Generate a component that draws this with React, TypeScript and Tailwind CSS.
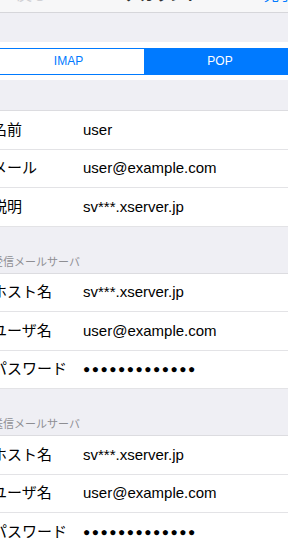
import React from 'react'

const font = { fontFamily: '"Liberation Sans", "Noto Sans CJK JP", sans-serif' }

interface Row {
  label: string
  value: string
  secret?: boolean
}

function Section({ title, rows }: { title?: string; rows: Row[] }) {
  return (
    <div>
      {title && (
        <div className="h-[46px] flex items-end pb-[5px] -ml-[8px] text-[11px] leading-none text-[#8e8e93]">
          {title}
        </div>
      )}
      <div className="bg-white border-t border-[#dcdce0]">
        {rows.map((r) => (
          <div key={r.label} className="h-[38.5px] flex items-center border-b border-[#e3e3e6]">
            <span className="w-[91px] shrink-0 -ml-[8px] text-[15px] text-black whitespace-nowrap">{r.label}</span>
            {r.secret ? (
              <span className="text-[12px] tracking-[1.5px] text-black">●●●●●●●●●●●●●</span>
            ) : (
              <span className="text-[15px] text-black">{r.value}</span>
            )}
          </div>
        ))}
      </div>
    </div>
  )
}

export default function App() {
  const account: Row[] = [
    { label: '名前', value: 'user' },
    { label: 'メール', value: 'user@example.com' },
    { label: '説明', value: 'sv***.xserver.jp' },
  ]
  const server: Row[] = [
    { label: 'ホスト名', value: 'sv***.xserver.jp' },
    { label: 'ユーザ名', value: 'user@example.com' },
    { label: 'パスワード', value: '', secret: true },
  ]

  return (
    <div className="w-[288px] h-[551px] overflow-hidden bg-[#efeff4]" style={font}>
      <div className="h-[13px] overflow-hidden bg-[#f7f7f8] border-b border-[#d6d6da] flex items-start">
        <span className="-mt-[13px] ml-[4px] text-[15px] text-[#d0d0d4] leading-none">&lt; 戻る</span>
        <span className="-mt-[13px] ml-[46px] text-[15px] font-bold text-[#333] leading-none">POPアカウント</span>
        <span className="-mt-[13px] ml-auto -mr-[6px] text-[15px] text-[#007aff] leading-none">完了</span>
      </div>
      <div className="h-[29px]" />
      <div className="bg-white h-[38px] flex items-center overflow-hidden">
        <div className="flex h-[27px] w-[304px] -ml-[8px] shrink-0 border border-[#007aff] rounded-[4px] overflow-hidden text-[12px]">
          <div className="w-[152px] flex items-center justify-center text-[#007aff] border-r border-[#007aff]">IMAP</div>
          <div className="flex-1 flex items-center justify-center bg-[#007aff] text-white">POP</div>
        </div>
      </div>
      <div className="h-[30px]" />
      <Section rows={account} />
      <Section title="受信メールサーバ" rows={server} />
      <Section title="送信メールサーバ" rows={server} />
    </div>
  )
}
